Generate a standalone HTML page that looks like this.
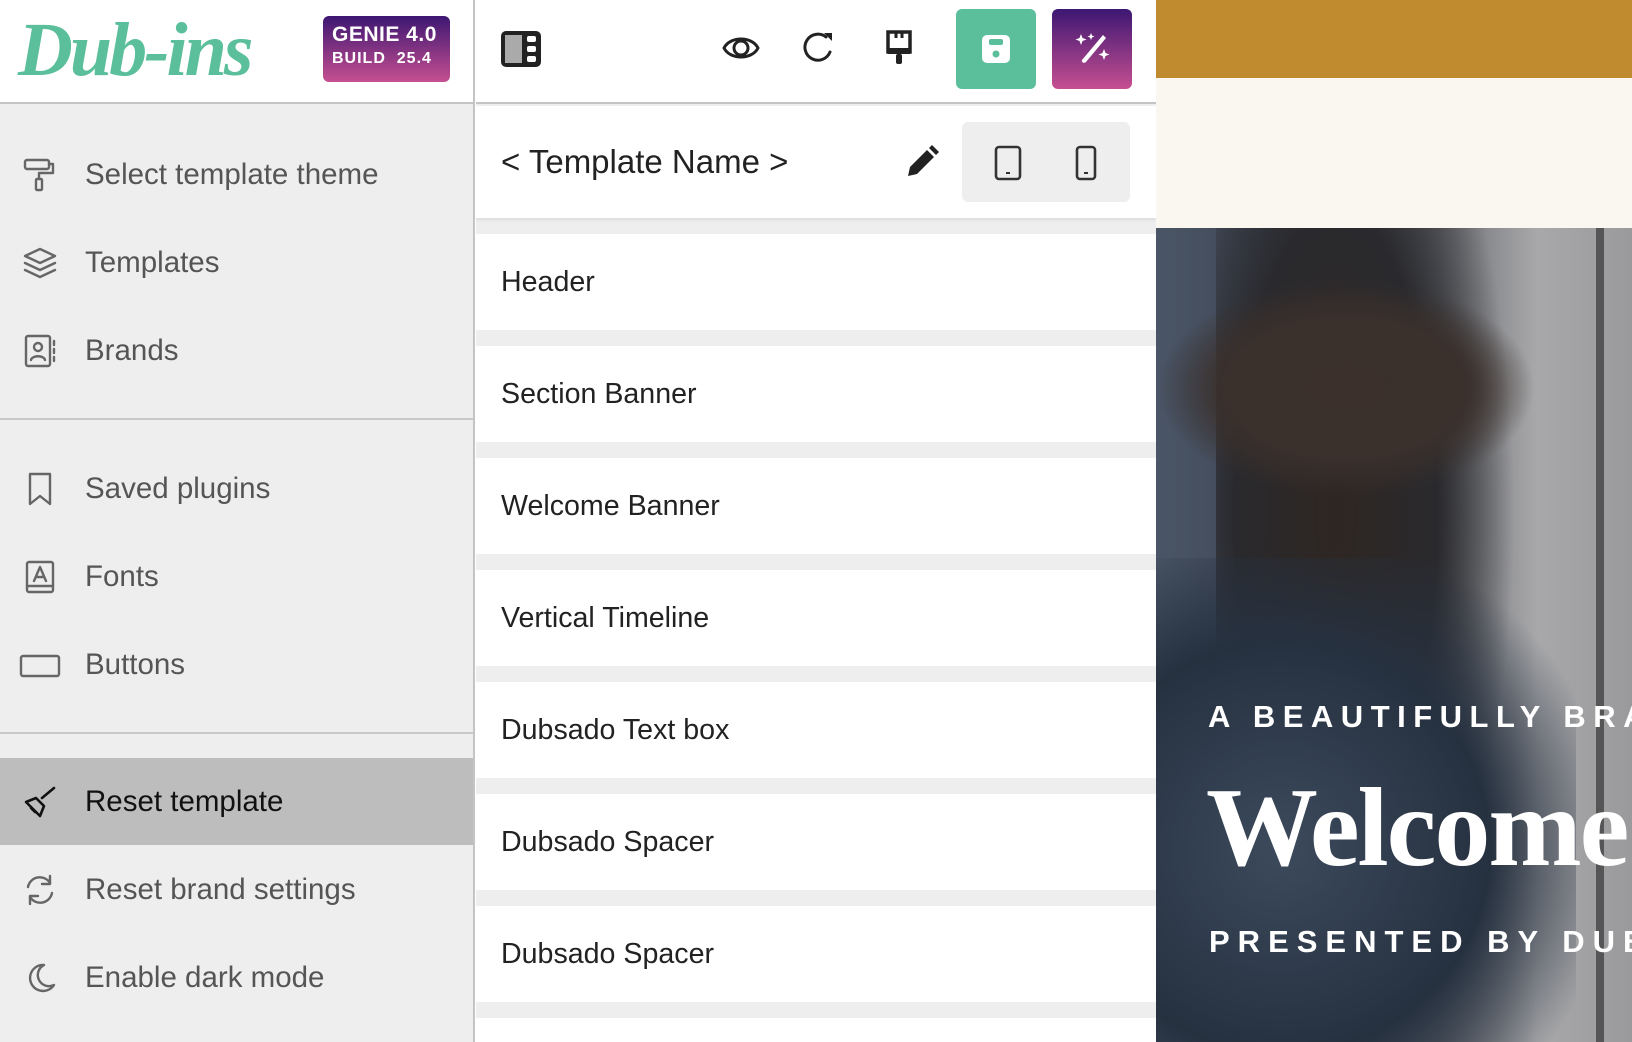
<!DOCTYPE html>
<html style="width:1632px;height:1042px;overflow:hidden"><head><meta charset="utf-8"><style>
*{margin:0;padding:0;box-sizing:border-box}
body{width:1632px;height:1042px;overflow:hidden;font-family:"Liberation Sans",sans-serif;background:#fff;position:relative}
.abs{position:absolute}
#side{left:0;top:0;width:475px;height:1042px;background:#eeeeee;border-right:2px solid #c4c4c4;overflow:hidden}
#logoBar{left:0;top:0;width:475px;height:104px;background:#fff;border-bottom:2px solid #c4c4c4}
.item{position:absolute;left:0;width:474px;height:87px;display:flex;align-items:center;font-size:29.5px;color:#555}
.item svg{position:absolute;left:22px}
.item span{position:absolute;left:85px}
.div{position:absolute;left:0;width:474px;height:2px;background:#c8c8c8}
#mid{left:476px;top:0;width:680px;height:1042px;background:#eeeeee;overflow:hidden}
.row{position:absolute;left:0;width:680px;height:96px;background:#fff;font-size:28.6px;color:#222;padding-left:25px;display:flex;align-items:center}
.hi{stroke:#222;fill:none;stroke-width:2.6;stroke-linecap:round;stroke-linejoin:round}
.si{stroke:#666;fill:none;stroke-width:2.4;stroke-linecap:round;stroke-linejoin:round}
</style></head><body>
<div class="abs" id="side">
 <div class="abs" id="logoBar">
  <div class="abs" style="left:18px;top:7px;font-family:'Liberation Serif',serif;font-style:italic;font-weight:bold;font-size:76px;color:#5bbf9b;letter-spacing:-3px">Dub-ins</div>
  <div class="abs" style="left:323px;top:16px;width:127px;height:66px;border-radius:6px;background:linear-gradient(#3d1772,#c64f91);color:#fff;font-weight:bold;padding:7px 0 0 9px">
   <div style="font-size:21px;letter-spacing:.5px">GENIE 4.0</div>
   <div style="font-size:16px;letter-spacing:1px;margin-top:3px">BUILD&nbsp; 25.4</div>
  </div>
 </div>
 <div class="item" style="top:131px"><svg width="36" height="36" viewBox="0 0 36 36" class="si"><rect x="3" y="3" width="24" height="9" rx="2"/><path d="M27 7h4v9H17v6"/><rect x="14" y="22" width="6" height="11" rx="1"/></svg><span>Select template theme</span></div>
 <div class="item" style="top:219px"><svg width="36" height="36" viewBox="0 0 36 36" class="si"><path d="M18 4L33 11 18 18 3 11z"/><path d="M3 18l15 7 15-7"/><path d="M3 25l15 7 15-7"/></svg><span>Templates</span></div>
 <div class="item" style="top:307px"><svg width="36" height="36" viewBox="0 0 36 36" class="si"><rect x="4" y="3" width="24" height="30" rx="2"/><circle cx="16" cy="14" r="4"/><path d="M9 27c1-5 13-5 14 0M32 8v4M32 16v4M32 24v4"/></svg><span>Brands</span></div>
 <div class="div" style="top:418px"></div>
 <div class="item" style="top:445px"><svg width="36" height="36" viewBox="0 0 36 36" class="si"><path d="M8 3h20v30l-10-8-10 8z"/></svg><span>Saved plugins</span></div>
 <div class="item" style="top:533px"><svg width="36" height="36" viewBox="0 0 36 36" class="si"><rect x="5" y="3" width="26" height="30" rx="2"/><path d="M5 27h26M12 22l6-14 6 14M14 18h8"/></svg><span>Fonts</span></div>
 <div class="item" style="top:621px"><svg width="42" height="36" viewBox="0 0 42 36" class="si" style="left:19px"><rect x="2" y="9" width="38" height="20" rx="2"/></svg><span>Buttons</span></div>
 <div class="div" style="top:732px"></div>
 <div class="item" style="top:758px;background:#bdbdbd;color:#111"><svg width="36" height="36" viewBox="0 0 36 36" class="hi"><path d="M20 14l12-10M4 18l10-4 8 8-4 10z" stroke="#111"/><path d="M9 24l4 4" stroke="#111"/></svg><span>Reset template</span></div>
 <div class="item" style="top:846px"><svg width="36" height="36" viewBox="0 0 36 36" class="si"><path d="M6 15a12 12 0 0 1 22-4M30 21a12 12 0 0 1-22 4"/><path d="M28 4v8h-8M8 32v-8h8"/></svg><span>Reset brand settings</span></div>
 <div class="item" style="top:934px"><svg width="36" height="36" viewBox="0 0 36 36" class="si"><path d="M22 5a13 13 0 1 0 10 20A11 11 0 0 1 22 5z"/></svg><span>Enable dark mode</span></div>
</div>

<div class="abs" id="mid">
 <div class="abs" style="left:0;top:0;width:680px;height:104px;background:#fff;border-bottom:2px solid #c4c4c4"></div>
 <svg class="abs" style="left:24px;top:30px" width="42" height="38" viewBox="0 0 42 38"><rect x="1" y="1" width="40" height="36" rx="5" fill="#222"/><rect x="5" y="5" width="17" height="28" fill="#aaa"/><rect x="27" y="6" width="9" height="6" rx="2" fill="#fff"/><rect x="27" y="16" width="9" height="6" rx="2" fill="#fff"/><rect x="27" y="26" width="9" height="6" rx="2" fill="#fff"/></svg>
 <svg class="abs" style="left:246px;top:32px" width="38" height="32" viewBox="0 0 38 32"><path d="M2 16C8 4 30 4 36 16 30 28 8 28 2 16z" stroke="#222" stroke-width="3" fill="none"/><circle cx="19" cy="16" r="7" stroke="#222" stroke-width="3" fill="none"/></svg>
 <svg class="abs" style="left:326px;top:30px" width="34" height="36" viewBox="0 0 34 36"><path d="M28 22A13 13 0 1 1 24 7" stroke="#222" stroke-width="3" fill="none" stroke-linecap="round"/><path d="M22 3h8v8z" fill="#222"/></svg>
 <svg class="abs" style="left:408px;top:30px" width="30" height="38" viewBox="0 0 30 38"><path d="M4 2h22v20H4z" fill="#fff" stroke="#222" stroke-width="3.5"/><path d="M4 18h22v6H4z" fill="#222"/><rect x="12" y="24" width="6" height="10" rx="2" fill="#222"/><path d="M12 2v6M18 2v6" stroke="#222" stroke-width="3"/></svg>
 <div class="abs" style="left:480px;top:9px;width:80px;height:80px;border-radius:6px;background:#5bbf9b"></div>
 <svg class="abs" style="left:504px;top:33px" width="32" height="32" viewBox="0 0 32 32"><rect x="2" y="2" width="28" height="28" rx="5" fill="#fff"/><rect x="9" y="6" width="14" height="6" rx="2" fill="#5bbf9b"/><circle cx="16" cy="21" r="3.5" fill="#5bbf9b"/></svg>
 <div class="abs" style="left:576px;top:9px;width:80px;height:80px;border-radius:6px;background:linear-gradient(#3d1772,#c64f91)"></div>
 <svg class="abs" style="left:597px;top:30px" width="38" height="38" viewBox="0 0 38 38" fill="#fff"><path d="M30 5l3 3-20 24c-2 2-5 0-4-2z"/><path d="M8 4l1.5 4 4 1.5-4 1.5L8 15l-1.5-4-4-1.5 4-1.5z"/><path d="M31 19l1.5 4 4 1.5-4 1.5-1.5 4-1.5-4-4-1.5 4-1.5z"/><path d="M18 3l1 2.5 2.5 1-2.5 1L18 10l-1-2.5-2.5-1 2.5-1z"/></svg>

 <div class="abs" style="left:0;top:106px;width:680px;height:112px;background:#fff;box-shadow:0 2px 3px rgba(0,0,0,.08)"></div>
 <div class="abs" style="left:25px;top:143px;font-size:33px;color:#222">&lt; Template Name &gt;</div>
 <svg class="abs" style="left:428px;top:144px" width="36" height="36" viewBox="0 0 36 36"><path d="M4 32l2-9 17-17 7 7-17 17z" fill="#222"/><path d="M25 4l3-3 7 7-3 3z" fill="#222"/></svg>
 <div class="abs" style="left:486px;top:122px;width:168px;height:80px;border-radius:6px;background:#eeeeee"></div>
 <svg class="abs" style="left:518px;top:145px" width="30" height="36" viewBox="0 0 30 36"><rect x="2" y="2" width="24" height="32" rx="3" stroke="#333" stroke-width="2.6" fill="none"/><path d="M12 28h4" stroke="#333" stroke-width="2"/></svg>
 <svg class="abs" style="left:599px;top:145px" width="24" height="36" viewBox="0 0 24 36"><rect x="2" y="2" width="18" height="32" rx="3" stroke="#333" stroke-width="2.6" fill="none"/><path d="M9 28h4" stroke="#333" stroke-width="2"/></svg>

 <div class="row" style="top:234px">Header</div>
 <div class="row" style="top:346px">Section Banner</div>
 <div class="row" style="top:458px">Welcome Banner</div>
 <div class="row" style="top:570px">Vertical Timeline</div>
 <div class="row" style="top:682px">Dubsado Text box</div>
 <div class="row" style="top:794px">Dubsado Spacer</div>
 <div class="row" style="top:906px">Dubsado Spacer</div>
 <div class="row" style="top:1018px;height:24px"></div>
</div>

<div class="abs" style="left:1156px;top:0;width:476px;height:78px;background:#c08a2e"></div>
<div class="abs" style="left:1156px;top:78px;width:476px;height:150px;background:#faf6f0"></div>
<div class="abs" style="left:1156px;top:228px;width:476px;height:814px;overflow:hidden;background:linear-gradient(90deg,#4a5566 0%,#3a4250 35%,#6d6f74 60%,#a8a8aa 80%,#9a9a9c 100%)">
 <div class="abs" style="left:60px;top:0;width:300px;height:814px;background:radial-gradient(ellipse at 40% 35%,#2e2622 0%,#2a2a2e 40%,rgba(40,45,55,0) 70%)"></div>
 <div class="abs" style="left:0;top:50px;width:380px;height:220px;background:radial-gradient(ellipse at 50% 50%,#3b302b 0%,#3a302c 45%,rgba(0,0,0,0) 70%)"></div>
 <div class="abs" style="left:0;top:330px;width:420px;height:484px;background:radial-gradient(ellipse at 30% 60%,#3c4a5c 0%,#263140 50%,rgba(30,38,50,0) 80%)"></div>
 <div class="abs" style="left:440px;top:0;width:8px;height:814px;background:#555"></div>
 <div class="abs" style="left:52px;top:471px;color:#fff;font-size:31px;font-weight:bold;letter-spacing:7.5px;white-space:nowrap">A BEAUTIFULLY BRAND</div>
 <div class="abs" style="left:50px;top:536px;color:#fff;font-family:'Liberation Serif',serif;font-weight:bold;font-size:112px;letter-spacing:-2px;white-space:nowrap">Welcome</div>
 <div class="abs" style="left:53px;top:696px;color:#fff;font-size:31px;font-weight:bold;letter-spacing:8px;white-space:nowrap">PRESENTED BY DUBSADO</div>
</div>
</body></html>
